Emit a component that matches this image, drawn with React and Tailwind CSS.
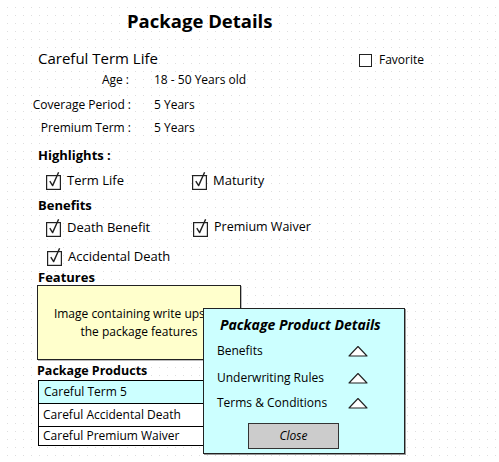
import React from "react";

const F = "font-['Comic_Sans_MS','Open_Sans',sans-serif]";

function Check() {
  return (
    <svg width="16" height="19" viewBox="0 0 16 19" className="shrink-0">
      <rect x="0.6" y="4.6" width="13.8" height="13.8" fill="white" stroke="#222" strokeWidth="1.2" />
      <path d="M3.8 10.2 L6.6 14.6 L12.6 1.2" fill="none" stroke="#222" strokeWidth="1.4" strokeLinejoin="round" />
    </svg>
  );
}

function Tri() {
  return (
    <svg width="20" height="12" viewBox="0 0 20 12">
      <path d="M1 11 L10 1.5 L19 11 Z" fill="white" stroke="#222" strokeWidth="1.1" strokeLinejoin="round" />
    </svg>
  );
}

function CheckItem({ label, w }) {
  return (
    <div className={`flex items-center gap-[5px] ${w}`}>
      <Check />
      <span className="text-[13px] leading-none">{label}</span>
    </div>
  );
}

export default function App() {
  return (
    <div
      className={`${F} relative w-[499px] h-[462px] overflow-hidden text-black bg-white bg-[image:linear-gradient(to_right,#fff_7px,transparent_7px),linear-gradient(to_bottom,#fff_7px,#dedede_7px)] bg-[size:8px_8px]`}
    >
      <div className="h-[26px] mt-[8px] pl-[127px] flex items-center">
        <span className="text-[18.5px] font-bold leading-none">Package Details</span>
      </div>

      <div className="h-[20px] mt-[14px] flex items-center">
        <span className="pl-[38px] w-[359px] text-[15px] leading-none">Careful Term Life</span>
        <div className="flex items-center gap-[7px] mt-[4px]">
          <span className="w-[13px] h-[13px] border border-[#222] bg-white" />
          <span className="text-[12px] leading-none">Favorite</span>
        </div>
      </div>

      <div className="h-[18px] mt-[3px] flex items-center text-[12px] leading-none">
        <span className="w-[131px] text-right pr-[2px]">Age :</span>
        <span className="pl-[23px]">18 - 50 Years old</span>
      </div>
      <div className="h-[18px] mt-[7px] flex items-center text-[12px] leading-none">
        <span className="w-[131px] text-right">Coverage Period :</span>
        <span className="pl-[23px]">5 Years</span>
      </div>
      <div className="h-[18px] mt-[5px] flex items-center text-[12px] leading-none">
        <span className="w-[131px] text-right">Premium Term :</span>
        <span className="pl-[23px]">5 Years</span>
      </div>

      <div className="h-[18px] mt-[9px] pl-[38px] flex items-center">
        <span className="text-[13px] font-bold leading-none">Highlights :</span>
      </div>
      <div className="h-[20px] mt-[6px] pl-[46px] flex items-center">
        <CheckItem label="Term Life" w="w-[146px]" />
        <CheckItem label="Maturity" w="" />
      </div>

      <div className="h-[18px] mt-[6px] pl-[38px] flex items-center">
        <span className="text-[13px] font-bold leading-none">Benefits</span>
      </div>
      <div className="h-[20px] mt-[3px] pl-[46px] flex items-center">
        <CheckItem label="Death Benefit" w="w-[147px]" />
        <div className="flex items-center gap-[5px]">
          <Check />
          <span className="text-[12.5px] leading-none">Premium Waiver</span>
        </div>
      </div>
      <div className="h-[20px] mt-[9px] pl-[47px] flex items-center">
        <CheckItem label="Accidental Death" w="" />
      </div>

      <div className="h-[16px] mt-[3px] pl-[38px] flex items-center">
        <span className="text-[13px] font-bold leading-none">Features</span>
      </div>
      <div className="ml-[37px] w-[204px] h-[75px] border border-[#222] bg-[#ffffcc] shadow-[1px_1px_0_#bbb] flex flex-col items-center justify-center text-[12px] leading-[18px] text-center">
        <span className="whitespace-nowrap">Image containing write ups for</span>
        <span className="whitespace-nowrap">the package features</span>
      </div>

      <div className="h-[17px] mt-[3px] pl-[37px] flex items-center">
        <span className="text-[12.5px] font-bold leading-none">Package Products</span>
      </div>
      <div className="ml-[38px] w-[200px] border border-black text-[12px] leading-none">
        <div className="h-[23px] bg-[#ccffff] border-b border-black flex items-center pl-[5px]">Careful Term 5</div>
        <div className="h-[23px] bg-white border-b border-black flex items-center pl-[4px]">Careful Accidental Death</div>
        <div className="h-[18px] bg-white flex items-center pl-[4px]">Careful Premium Waiver</div>
      </div>

      <div className="absolute left-[203px] top-[308px] w-[202px] h-[146px] border border-[#222] bg-[#ccffff] shadow-[1px_1px_0_#999] flex flex-col">
        <div className="h-[16px] mt-[8px] pl-[16px] flex items-center">
          <span className="text-[14px] font-bold italic leading-none">Package Product Details</span>
        </div>
        <div className="h-[16px] mt-[10px] pl-[13px] flex items-center text-[12px] leading-none">
          <span className="w-[131px]">Benefits</span>
          <Tri />
        </div>
        <div className="h-[16px] mt-[11px] pl-[13px] flex items-center text-[12px] leading-none">
          <span className="w-[131px]">Underwriting Rules</span>
          <Tri />
        </div>
        <div className="h-[16px] mt-[9px] pl-[13px] flex items-center text-[12px] leading-none">
          <span className="w-[131px]">Terms &amp; Conditions</span>
          <Tri />
        </div>
        <div className="ml-[44px] mt-[12px] w-[91px] h-[26px] border border-[#333] bg-[#cccccc] flex items-center justify-center text-[12px] italic leading-none">
          Close
        </div>
      </div>
    </div>
  );
}
